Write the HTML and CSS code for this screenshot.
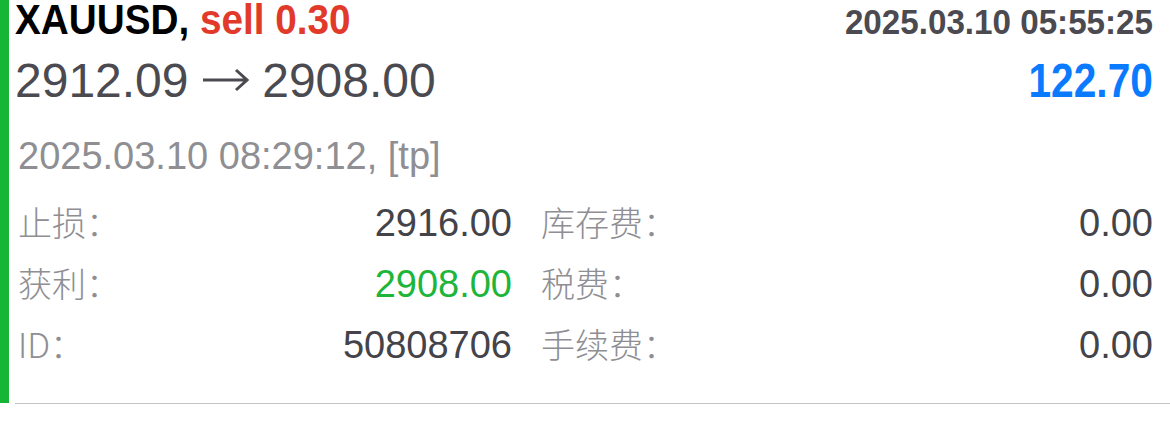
FILE: index.html
```html
<!DOCTYPE html>
<html lang="zh-CN">

<head>
  <meta charset="UTF-8">
  <meta name="viewport" content="width=device-width, initial-scale=1.0">
  <title>Deal</title>
  <link rel="stylesheet" href="styles.css">
</head>
<body>
  <!-- Closed deal -->
  <div class="deal">
    <div class="marker"></div>
    <div class="deal-body">
      <div class="head-row">
        <div class="title">XAUUSD, <span class="sell">sell 0.30</span></div>
        <div class="open-time">2025.03.10 05:55:25</div>
      </div>

      <div class="price-row">
        <div class="prices">2912.09 <svg class="arrow" width="47" height="24" viewBox="0 0 47 24"><path d="M1 12H45M34 2L45 12L34 22" fill="none" stroke="#4a4a50" stroke-width="3"/></svg> 2908.00</div>
        <div class="profit">122.70</div>
      </div>

      <div class="close-time">2025.03.10 08:29:12, [tp]</div>

      <div class="details">
        <div class="pair">
          <span class="label">止损：</span>
          <span class="value">2916.00</span>
        </div>
        <div class="pair">
          <span class="label">库存费：</span>
          <span class="value">0.00</span>
        </div>
        <div class="pair">
          <span class="label">获利：</span>
          <span class="value green">2908.00</span>
        </div>
        <div class="pair">
          <span class="label">税费：</span>
          <span class="value">0.00</span>
        </div>
        <div class="pair">
          <span class="label">ID：</span>
          <span class="value">50808706</span>
        </div>
        <div class="pair">
          <span class="label">手续费：</span>
          <span class="value">0.00</span>
        </div>
      </div>
    </div>
  </div>
  <div class="divider"></div>
</body>
</html>
```

FILE: styles.css
```css
body {
  font-family: "Liberation Sans", Arial, "Noto Sans CJK SC", sans-serif;
  margin: 0;
  padding: 0;
  background-color: #ffffff;
  color: #4a4a50;
}

.deal {
  display: flex;
  height: 403px;
}

.marker {
  width: 9px;
  background-color: #17b535;
  flex-shrink: 0;
}

.deal-body {
  flex: 1;
  padding: 0 17px 0 6px;
}

.head-row,
.price-row {
  display: flex;
  justify-content: space-between;
  align-items: baseline;
}

/* the app uses a condensed bold face, squeeze the regular one */
.title {
  font-weight: bold;
  font-size: 43px;
  line-height: 38px;
  color: #000000;
  white-space: nowrap;
  transform: scaleX(0.9);
  transform-origin: left center;
}

.sell {
  color: #e1392a;
}

.open-time {
  font-weight: bold;
  font-size: 35px;
  color: #4a4a50;
  white-space: nowrap;
  transform: scaleX(0.948);
  transform-origin: right center;
}

.price-row {
  margin-top: 10px;
  line-height: 56px;
}

.prices {
  font-size: 48px;
  color: #4a4a50;
}

.arrow {
  vertical-align: 5px;
}

.profit {
  font-weight: bold;
  font-size: 49px;
  color: #0a7bff;
  transform: scaleX(0.83);
  transform-origin: right center;
}

.close-time {
  margin-top: 25px;
  padding-left: 3px;
  font-size: 38px;
  line-height: 44px;
  color: #8e8e93;
}

.details {
  display: grid;
  grid-template-columns: 494px 1fr;
  column-gap: 29px;
  margin-top: 14px;
  padding-left: 3px;
}

.pair {
  display: flex;
  justify-content: space-between;
  align-items: baseline;
  line-height: 60px;
}

.label {
  font-family: "Noto Sans CJK SC", sans-serif;
  font-size: 34px;
  font-weight: 300;
  color: #8e8e93;
}

.value {
  font-size: 38px;
  color: #434349;
}

.green {
  color: #1db53a;
}

.divider {
  margin-left: 15px;
  border-top: 1px solid #c4c4c8;
}
```
